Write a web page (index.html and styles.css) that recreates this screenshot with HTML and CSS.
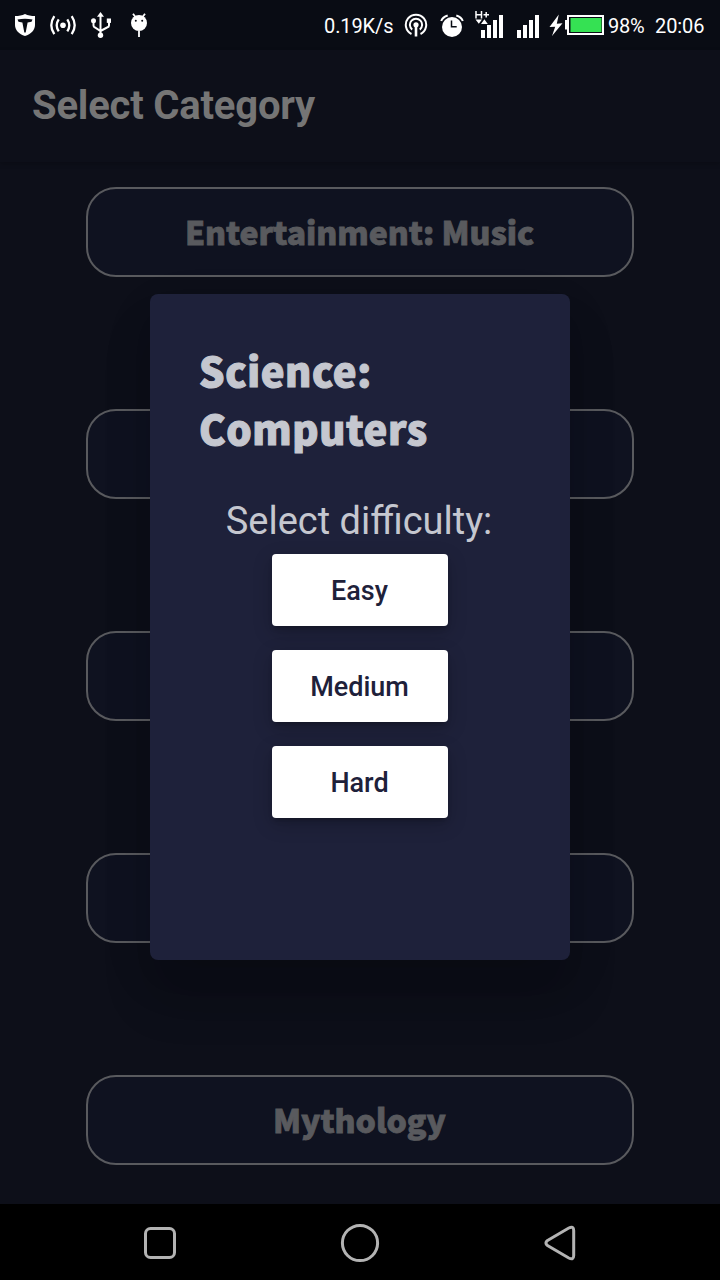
FILE: index.html
```html
<!DOCTYPE html>
<html lang="en">
<head>
<meta charset="utf-8">
<title>Select Category</title>
<link rel="stylesheet" href="styles.css">
</head>
<body>
<div class="screen">
  <header class="status">
    <div class="notifications">
      <svg width="22" height="24" viewBox="14 13 22 24"><path fill="#fff" d="M25 14c3 1.500 6 2 10 2v9c0 5-4 9-10 11-6-2-10-6-10-11v-9c4 0 7-.5 10-2z"/><path fill="#090c14" d="M17.500 19.500c5-1 10-1 15 0l-1 2.200-3.900.8L25.700 32.500h-1.400l-1.900-10-3.900-.8z"/></svg>
      <svg width="28" height="24" viewBox="49 13 28 24" fill="none" stroke="#fff" stroke-width="2.300"><circle cx="63" cy="25.200" r="2.800" fill="#fff" stroke="none"/><path d="M58.700 19.300q-4 6 0 12M67.300 19.300q4 6 0 12M54.300 16.200q-6 9 0 18M71.700 16.200q6 9 0 18"/></svg>
      <svg width="22" height="28" viewBox="90 11 22 28" fill="none" stroke="#fff" stroke-width="2"><path d="M100.500 15v20M93.500 21v4.500q0 1.500 1.500 2l5.500 3.500 6.500-3.500q2-.5 2-2V21"/><path d="M100.500 12l3.500 4.700h-7z" fill="#fff" stroke="none"/><circle cx="93.500" cy="20.800" r="2.500" fill="#fff" stroke="none"/><path d="M106.800 18.500h4.200v4.400h-4.200z" fill="#fff" stroke="none"/><circle cx="100.500" cy="35.200" r="2.700" fill="#fff" stroke="none"/></svg>
      <svg width="18" height="26" viewBox="130 12 18 26"><path d="M133 13.800l3 4M145 13.800l-3 4M139 31v6" stroke="#fff" stroke-width="1.800" fill="none"/><circle cx="139" cy="23" r="8" fill="#fff"/><circle cx="135.800" cy="20.700" r="1" fill="#090c14"/><circle cx="142.200" cy="20.700" r="1" fill="#090c14"/></svg>
    </div>
    <div class="system">
      <span class="speed">0.19K/s</span>
      <svg class="cast" width="24" height="26" viewBox="404 12 24 26" fill="none" stroke="#fff" stroke-width="2"><path d="M411.500 34a10.200 10.200 0 1 1 9 0M412.200 29.600a6.100 6.100 0 1 1 7.600 0"/><circle cx="416" cy="24.800" r="2.600" fill="#fff" stroke="none"/><path d="M416 25v11.500" stroke-width="2.600"/></svg>
      <svg class="alarm" width="26" height="26" viewBox="439 12 26 26" fill="none"><circle cx="452" cy="27" r="10" fill="#fff"/><path d="M441.200 21q1.500-4 6.500-5.500M462.800 21q-1.500-4-6.500-5.500" stroke="#fff" stroke-width="2"/><path d="M451.500 20.500v6.200h5.200" stroke="#090c14" stroke-width="1.500"/></svg>
      <svg class="mobile" width="29" height="30" viewBox="475 9 29 30" fill="#fff"><path d="M476 11v7.500M481.500 11v7.500M476 14.700h5.500M483.500 14.700h5.500M486.200 12v5.500" stroke="#fff" stroke-width="1.500"/><path d="M475.500 19.500h6.500l-3.200 4.300zM481 24l3.400-4.800 3.400 4.800z"/><path d="M481 30h4v8h-4zM487 25h4v13h-4zM493 20h4v18h-4zM499 15h4v23h-4z"/></svg>
      <svg class="signal" width="23" height="24" viewBox="517 15 23 24" fill="#fff"><path d="M517 30h4v8h-4zM523 25h4v13h-4zM529 20h4v18h-4zM535 15h4v23h-4z"/></svg>
      <svg class="battery" width="55" height="24" viewBox="549 14 55 24" fill="#fff"><path d="M558.800 14.500L549.500 27l5.700-.3-3.200 9.300 10.500-12.700-5.700.4z"/><path d="M567 15h37v20h-37v-5.500h-2V20h2z"/><path d="M569 17h33v16h-33z" fill="#090c14"/><path d="M570.500 18h31v14h-31z" fill="#35e153"/></svg>
      <span class="percent">98%</span>
      <span class="clock">20:06</span>
    </div>
  </header>
  <div class="appbar"><h1 class="page-title">Select Category</h1></div>
  <main class="categories">
    <div class="category">Entertainment: Music</div>
    <div class="category"></div>
    <div class="category"></div>
    <div class="category"></div>
    <div class="category">Mythology</div>
  </main>
  <nav class="navbar">
    <svg width="36" height="40" viewBox="142 1223 36 40"><rect x="145.500" y="1228.500" width="29" height="29" rx="5"/></svg>
    <svg width="40" height="40" viewBox="340 1223 40 40"><circle cx="360" cy="1243" r="17.600"/></svg>
    <svg width="36" height="40" viewBox="542 1223 36 40"><path d="M547.500 1240.500L568.800 1228q4.900-2.500 4.900 2.500v25q0 5-4.900 2.500L547.500 1245.500q-3.200-2.500 0-5z"/></svg>
  </nav>
  <section class="dialog">
    <h2 class="dialog-title">Science: Computers</h2>
    <p class="prompt">Select difficulty:</p>
    <div class="choices">
      <button class="choice">Easy</button>
      <button class="choice">Medium</button>
      <button class="choice">Hard</button>
    </div>
  </section>
</div>
</body>
</html>
```

FILE: styles.css
```css
* { box-sizing: border-box; }
body { margin: 0; font-family: Roboto, sans-serif; background: #0d0f19; }
svg { display: block; flex: none; }
.screen { position: relative; width: 720px; height: 1280px; display: flex; flex-direction: column; overflow: hidden; }
.status { height: 50px; flex: none; background: #090c14; color: #fff; display: flex; justify-content: space-between; align-items: center; padding: 0 16px 0 14px; font-size: 20px; line-height: 24px; }
.notifications { display: flex; align-items: center; gap: 13px; }
.notifications svg:last-child { margin-left: 5px; }
.system { display: flex; align-items: center; white-space: nowrap; padding-top: 2px; }
.system svg { margin-top: -2px; }
.speed { width: 80px; letter-spacing: -.1px; }
.cast { margin-right: 11px; }
.alarm { margin-right: 10px; }
.system .mobile { margin-right: 13px; margin-top: -4px; }
.system .signal { margin-right: 9px; margin-top: 2px; }
.system .battery { margin-right: 4px; margin-top: 0; }
.percent { width: 47px; letter-spacing: -.2px; }
.clock { width: 49px; letter-spacing: -.1px; }
.appbar { height: 112px; flex: none; display: flex; align-items: center; padding: 0 32px; background: #0d0f19; box-shadow: 0 2px 5px rgba(0, 0, 0, .2); }
.page-title { margin: 0; font-size: 40px; font-weight: 700; line-height: 48px; letter-spacing: -.2px; color: #757575; }
.categories { flex: 1; padding: 25px 86px 0; display: flex; flex-direction: column; gap: 132px; }
.category { height: 90px; flex: none; padding: 0 1px 2px 0; border: 2px solid #595a5e; border-radius: 30px; background: #0f1220; color: #595a5e; display: flex; align-items: center; justify-content: center; font: 900 32px/48px "Noto Sans CJK SC", sans-serif; letter-spacing: -.05px; -webkit-text-stroke: .8px #595a5e; white-space: nowrap; }
.navbar { height: 76px; flex: none; background: #000; display: flex; justify-content: space-between; align-items: center; padding: 2px 142px 0; }
.navbar svg { fill: none; stroke: #b3b3b3; stroke-width: 3; }
.dialog { position: absolute; left: 150px; top: 294px; width: 420px; height: 666px; padding: 47px 48px; border-radius: 8px; background: #1e213a; color: #c5c7cf; box-shadow: 0 22px 30px -14px rgba(0, 0, 0, .1), 0 40px 50px rgba(0, 0, 0, .14), 0 18px 60px rgba(0, 0, 0, .06); }
.dialog-title { margin: 0; padding-left: 1px; font: 900 40px/58px "Noto Sans CJK SC", sans-serif; letter-spacing: .6px; -webkit-text-stroke: 1.100px #c5c7cf; }
.prompt { margin: 41px 2px 0 0; font-size: 38px; line-height: 46px; text-align: center; white-space: nowrap; }
.choices { margin-top: 10px; display: flex; flex-direction: column; align-items: center; gap: 24px; }
.choice { width: 176px; height: 72px; border: 0; border-radius: 4px; padding: 2px 1px 0 0; background: #fff; color: #1e213a; font: 500 27px/34px Roboto, sans-serif; box-shadow: 0 6px 2px -4px rgba(0, 0, 0, .1), 0 4px 4px rgba(0, 0, 0, .08), 0 6px 20px rgba(0, 0, 0, .2); }
```
